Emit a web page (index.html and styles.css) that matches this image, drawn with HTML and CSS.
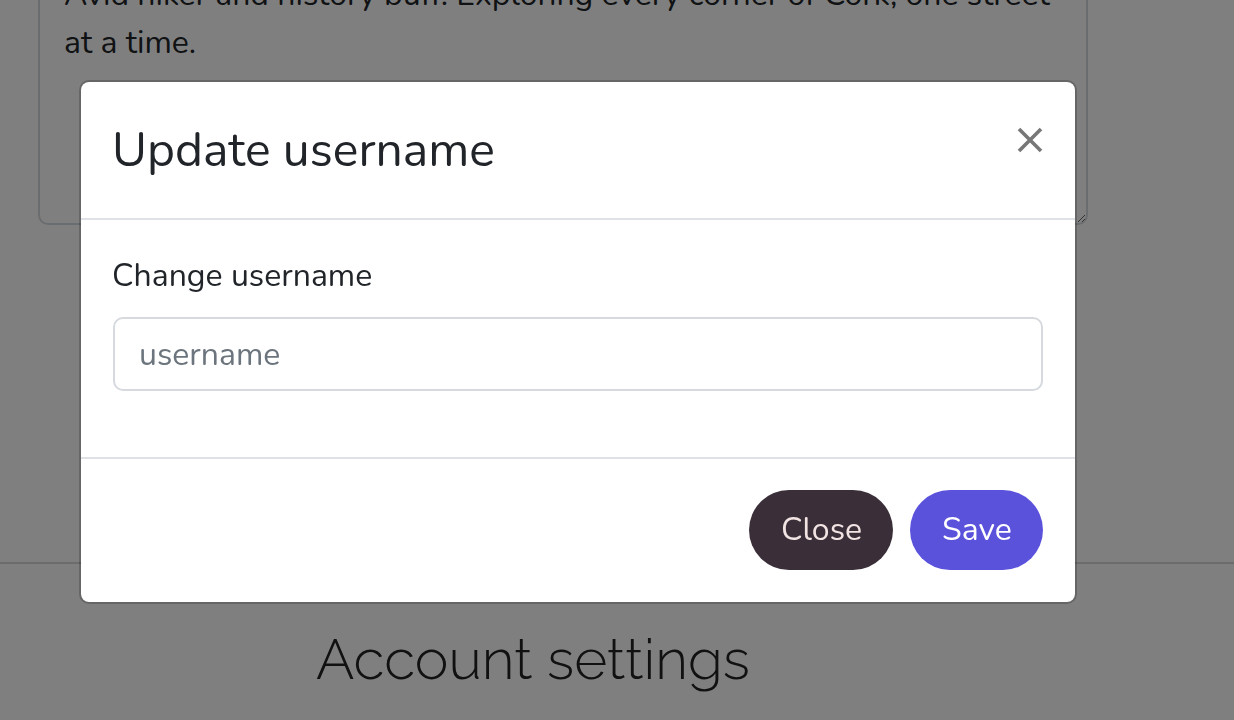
FILE: index.html
```html
<!DOCTYPE html>
<html lang="en">
<head>
<meta charset="utf-8">
<title>Update username</title>
<link rel="stylesheet" href="styles.css">
</head>
<body>
<main class="page">
  <div class="bio-wrap">
    <textarea class="bio" aria-label="Bio">Avid hiker and history buff. Exploring every corner of Cork, one street
at a time.</textarea>
  </div>
  <section class="settings">
    <h2 class="settings-title">Account settings</h2>
  </section>
</main>

<div class="backdrop"></div>

<div class="modal" role="dialog" aria-labelledby="modal-title">
  <div class="modal-header">
    <h4 class="modal-title" id="modal-title">Update username</h4>
    <button class="btn-close" aria-label="Close">
      <svg viewBox="0 0 26 26" width="26" height="26"><path d="M2 2 L24 24 M24 2 L2 24" stroke="currentColor" stroke-width="3.6" stroke-linecap="butt" fill="none"/></svg>
    </button>
  </div>
  <div class="modal-body">
    <label class="field-label" for="username">Change username</label>
    <input class="field-input" id="username" type="text" placeholder="username">
  </div>
  <div class="modal-footer">
    <button class="btn btn-dark">Close</button>
    <button class="btn btn-primary">Save</button>
  </div>
</div>
</body>
</html>
```

FILE: styles.css
```css
html, body {
  margin: 0;
  height: 720px;
  overflow: hidden;
  background: #fff;
  font-family: "Nunito", "Lato", "Open Sans", sans-serif;
  color: #212529;
}

.page {
  margin-top: -43px;
}

.bio-wrap {
  padding-left: 38px;
}

.bio {
  display: block;
  box-sizing: border-box;
  width: 1050px;
  height: 268px;
  padding: 12px 24px;
  border: 2px solid #d5dadf;
  border-radius: 10px;
  font-family: inherit;
  font-size: 32px;
  line-height: 48px;
  color: #212529;
  resize: vertical;
  background: #fff;
}

.settings {
  margin-top: 337px;
  border-top: 2px solid #d8d8d8;
  padding-left: 316px;
}

.settings-title {
  margin: 61px 0 0;
  font-family: "Raleway", "Lato", sans-serif;
  font-weight: 300;
  font-size: 56.8px;
  line-height: 1.2;
  color: #222;
}

.backdrop {
  position: fixed;
  inset: 0;
  background: rgba(0, 0, 0, 0.5);
}

.modal {
  position: fixed;
  left: 79px;
  top: 80px;
  width: 998px;
  box-sizing: border-box;
  background: #fff;
  border: 2px solid rgba(0, 0, 0, 0.2);
  border-radius: 10px;
  background-clip: padding-box;
}

.modal-header {
  display: flex;
  justify-content: space-between;
  align-items: flex-start;
  padding: 32px 32px 32px 31px;
  border-bottom: 2px solid #dee2e6;
}

.modal-title {
  margin: 0;
  font-size: 48px;
  line-height: 72px;
  font-weight: 400;
  color: #212529;
}

.btn-close {
  display: flex;
  margin: 13px 0 0 0;
  padding: 0;
  border: 0;
  background: none;
  color: #777;
  cursor: pointer;
}

.modal-body {
  padding: 32px 32px 32px 31px;
}

.field-label {
  display: block;
  font-size: 32px;
  line-height: 48px;
  margin-bottom: 17px;
}

.field-input {
  display: block;
  box-sizing: border-box;
  height: 74px;
  margin: 0 0 34px 1px;
  width: calc(100% - 1px);
  padding: 12px 24px;
  border: 2px solid #d6dade;
  border-radius: 10px;
  font-family: inherit;
  font-size: 32px;
  line-height: 48px;
  color: #212529;
  outline: none;
}

.field-input::placeholder {
  color: #6c757d;
}

.modal-footer {
  display: flex;
  justify-content: flex-end;
  gap: 17px;
  padding: 31px 32px 32px;
  border-top: 2px solid #dee2e6;
}

.btn {
  border: 0;
  border-radius: 40px;
  height: 80px;
  padding: 0 32px;
  font-family: inherit;
  font-size: 32px;
  line-height: 48px;
  cursor: pointer;
}

.btn-dark {
  width: 144px;
  background: #3a2f38;
  color: #f3e4e4;
}

.btn-primary {
  width: 133px;
  background: #5b52dc;
  color: #fff;
}
```
